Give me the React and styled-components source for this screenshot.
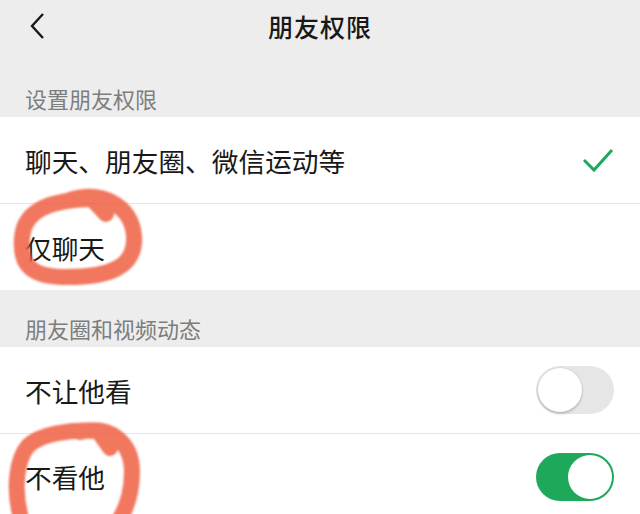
import React from 'react';
import styled, { createGlobalStyle } from 'styled-components';

const GlobalStyle = createGlobalStyle`
  body {
    margin: 0;
    background: #ededed;
    font-family: "Noto Sans CJK SC", "Noto Sans", sans-serif;
  }
`;

const Page = styled.div`
  position: relative;
  width: 640px;
  height: 514px;
  overflow: hidden;
  background: #ededed;
  color: #191919;
`;

const Header = styled.div`
  position: relative;
  height: 52px;
  display: flex;
  align-items: center;
  justify-content: center;
`;

const BackBtn = styled.div`
  position: absolute;
  left: 28px;
  top: 12px;
  width: 20px;
  height: 28px;
`;

const Title = styled.div`
  font-size: 25px;
  font-weight: 500;
  letter-spacing: 1px;
`;

const SectionLabel = styled.div`
  height: ${(p) => p.h}px;
  box-sizing: border-box;
  display: flex;
  align-items: flex-end;
  padding: 0 25px 4px;
  font-size: 22px;
  line-height: 30px;
  color: #7d7d7d;
`;

const Group = styled.div`
  background: #fff;
`;

const Row = styled.div`
  height: ${(p) => p.h}px;
  box-sizing: border-box;
  display: flex;
  align-items: center;
  justify-content: space-between;
  padding: 0 26px 0 25px;
  font-size: 26.7px;
  border-top: ${(p) => (p.first ? 'none' : '1px solid #e6e6e6')};
`;

const Toggle = styled.div`
  position: relative;
  width: 78px;
  height: 48px;
  border-radius: 24px;
  box-sizing: border-box;
  background: ${(p) => (p.on ? '#1ea85a' : '#e6e6e6')};
`;

const Knob = styled.div`
  position: absolute;
  top: 2px;
  left: ${(p) => (p.on ? '32px' : '2px')};
  width: 44px;
  height: 44px;
  border-radius: 50%;
  background: #fff;
  box-shadow: ${(p) => (p.on ? 'none' : '0 2px 3px rgba(0,0,0,0.18), 0 0 0 1px #dcdcdc')};
`;

const Marks = styled.svg`
  position: absolute;
  left: 0;
  top: 0;
  pointer-events: none;
`;

function Check() {
  return (
    <svg width="32" height="26" viewBox="0 0 32 26">
      <polyline points="2,13 12,23 30,3" fill="none" stroke="#1ea85a" strokeWidth="3" />
    </svg>
  );
}

export default function App() {
  return (
    <Page>
      <GlobalStyle />
      <Header>
        <BackBtn>
          <svg width="20" height="28" viewBox="0 0 20 28">
            <polyline points="15,2 4,14 15,26" fill="none" stroke="#191919" strokeWidth="2.4" />
          </svg>
        </BackBtn>
        <Title>朋友权限</Title>
      </Header>

      <SectionLabel h={65}>设置朋友权限</SectionLabel>
      <Group>
        <Row h={86} first>
          <span>聊天、朋友圈、微信运动等</span>
          <Check />
        </Row>
        <Row h={87}>
          <span>仅聊天</span>
        </Row>
      </Group>

      <SectionLabel h={57}>朋友圈和视频动态</SectionLabel>
      <Group>
        <Row h={86} first>
          <span>不让他看</span>
          <Toggle>
            <Knob />
          </Toggle>
        </Row>
        <Row h={86}>
          <span>不看他</span>
          <Toggle on>
            <Knob on />
          </Toggle>
        </Row>
      </Group>

      <Marks width="640" height="514" viewBox="0 0 640 514">
        <defs>
          <filter id="soft">
            <feGaussianBlur stdDeviation="0.8" />
          </filter>
        </defs>
        <g fill="none" stroke="#ee5f42" strokeOpacity="0.85" strokeWidth="16" strokeLinecap="round" filter="url(#soft)">
          <path d="M70 200 C 102 190, 132 206, 134 236 C 136 266, 112 278, 62 277 C 28 276, 20 262, 22 238 C 24 210, 50 200, 92 199 L 106 214" />
          <path d="M80 432 C 110 425, 132 442, 132 472 C 132 500, 122 518, 112 530 M 20 514 C 14 490, 16 460, 28 446 C 40 434, 70 429, 98 431 L 110 448" />
        </g>
      </Marks>
    </Page>
  );
}
